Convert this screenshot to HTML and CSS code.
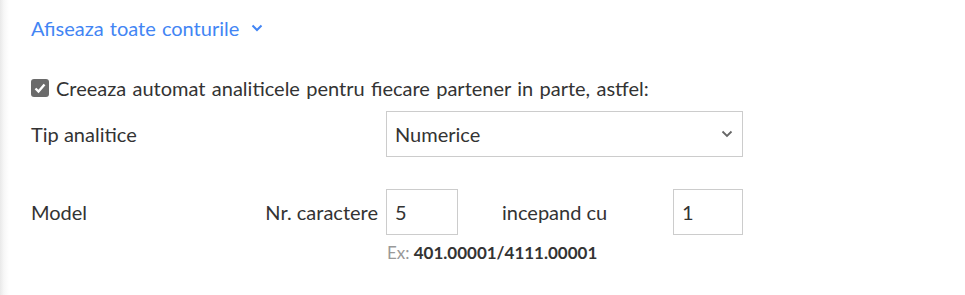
FILE: index.html
```html
<!DOCTYPE html>
<html lang="ro">
<head>
    <meta charset="UTF-8">
    <title>Setari conturi</title>
    <link rel="stylesheet" href="styles.css">
</head>
<body>

    <div class="panel">
        <!-- Toggle link -->
        <a class="toggle-link" href="#">
            Afiseaza toate conturile
            <svg width="12" height="8" viewBox="0 0 12 8"><path d="M1.5 1.5 L6 6 L10.5 1.5" fill="none" stroke="currentColor" stroke-width="2"/></svg>
        </a>

        <!-- Checkbox -->
        <label class="check-row">
            <span class="check-box">
                <svg width="14" height="14" viewBox="0 0 14 14"><path d="M2.5 7.5 L5.5 10.5 L11.5 3.5" fill="none" stroke="#fff" stroke-width="2.4"/></svg>
            </span>
            Creeaza automat analiticele pentru fiecare partener in parte, astfel:
        </label>

        <!-- Form grid -->
        <div class="form-grid">
            <div class="label">Tip analitice</div>
            <div class="select-wrap">
                <select class="field-select">
                    <option>Numerice</option>
                </select>
                <svg class="select-arrow" width="12" height="8" viewBox="0 0 12 8"><path d="M1.5 1.5 L6 6 L10.5 1.5" fill="none" stroke="currentColor" stroke-width="1.8"/></svg>
            </div>

            <div class="label label-split">
                <span>Model</span>
                <span>Nr. caractere</span>
            </div>
            <input class="field-input" type="text" value="5">
            <div class="label label-mid">incepand cu</div>
            <input class="field-input" type="text" value="1">

            <div></div>
            <div class="hint"><span class="hint-muted">Ex:</span> 401.00001/4111.00001</div>
        </div>
    </div>

</body>
</html>
```
FILE: styles.css
```css
/* Basic Reset */
* {
    margin: 0;
    padding: 0;
    box-sizing: border-box;
}

body {
    font-family: 'Lato', sans-serif;
    font-size: 20px;
    color: #333;
    height: 295px;
    background: linear-gradient(to right, #e9e9e9, #f7f7f7 4px, #fff 9px);
    overflow: hidden;
}

.panel {
    padding: 16px 0 0 31px;
}

/* Toggle link */
.toggle-link {
    display: inline-flex;
    align-items: center;
    gap: 12px;
    color: #4285f4;
    text-decoration: none;
    line-height: 24px;
    word-spacing: 1px;
}

/* Checkbox row */
.check-row {
    display: flex;
    align-items: center;
    gap: 7px;
    margin-top: 36px;
    line-height: 24px;
    color: #333;
    word-spacing: 1.2px;
}

.check-box {
    display: flex;
    align-items: center;
    justify-content: center;
    width: 18px;
    height: 18px;
    border-radius: 3px;
    background: #6b6b6b;
}

/* Form grid */
.form-grid {
    display: grid;
    grid-template-columns: 355px 72px 215px 70px;
    align-items: center;
    margin-top: 11px;
    row-gap: 32px;
}

.label {
    line-height: 24px;
}

.label-split {
    display: flex;
    justify-content: space-between;
    padding-right: 8px;
}

.label-mid {
    padding-left: 44px;
}

.select-wrap {
    position: relative;
    grid-column: 2 / 5;
}

.field-select {
    width: 100%;
    height: 46px;
    padding: 0 30px 0 8px;
    border: 1px solid #ccc;
    border-radius: 0;
    background: #fff;
    font-family: 'Lato', sans-serif;
    font-size: 20px;
    color: #333;
    appearance: none;
    outline: none;
}

.select-arrow {
    position: absolute;
    right: 10px;
    top: 19px;
    color: #666;
    pointer-events: none;
}

.field-input {
    width: 100%;
    height: 46px;
    padding: 0 8px;
    border: 1px solid #ccc;
    background: #fff;
    font-family: 'Lato', sans-serif;
    font-size: 20px;
    color: #333;
    outline: none;
}

.hint {
    grid-column: 2 / 5;
    margin-top: -29px;
    padding-left: 1px;
    font-size: 17px;
    font-weight: 700;
    color: #333;
}

.hint-muted {
    font-weight: 400;
    color: #999;
}
```
